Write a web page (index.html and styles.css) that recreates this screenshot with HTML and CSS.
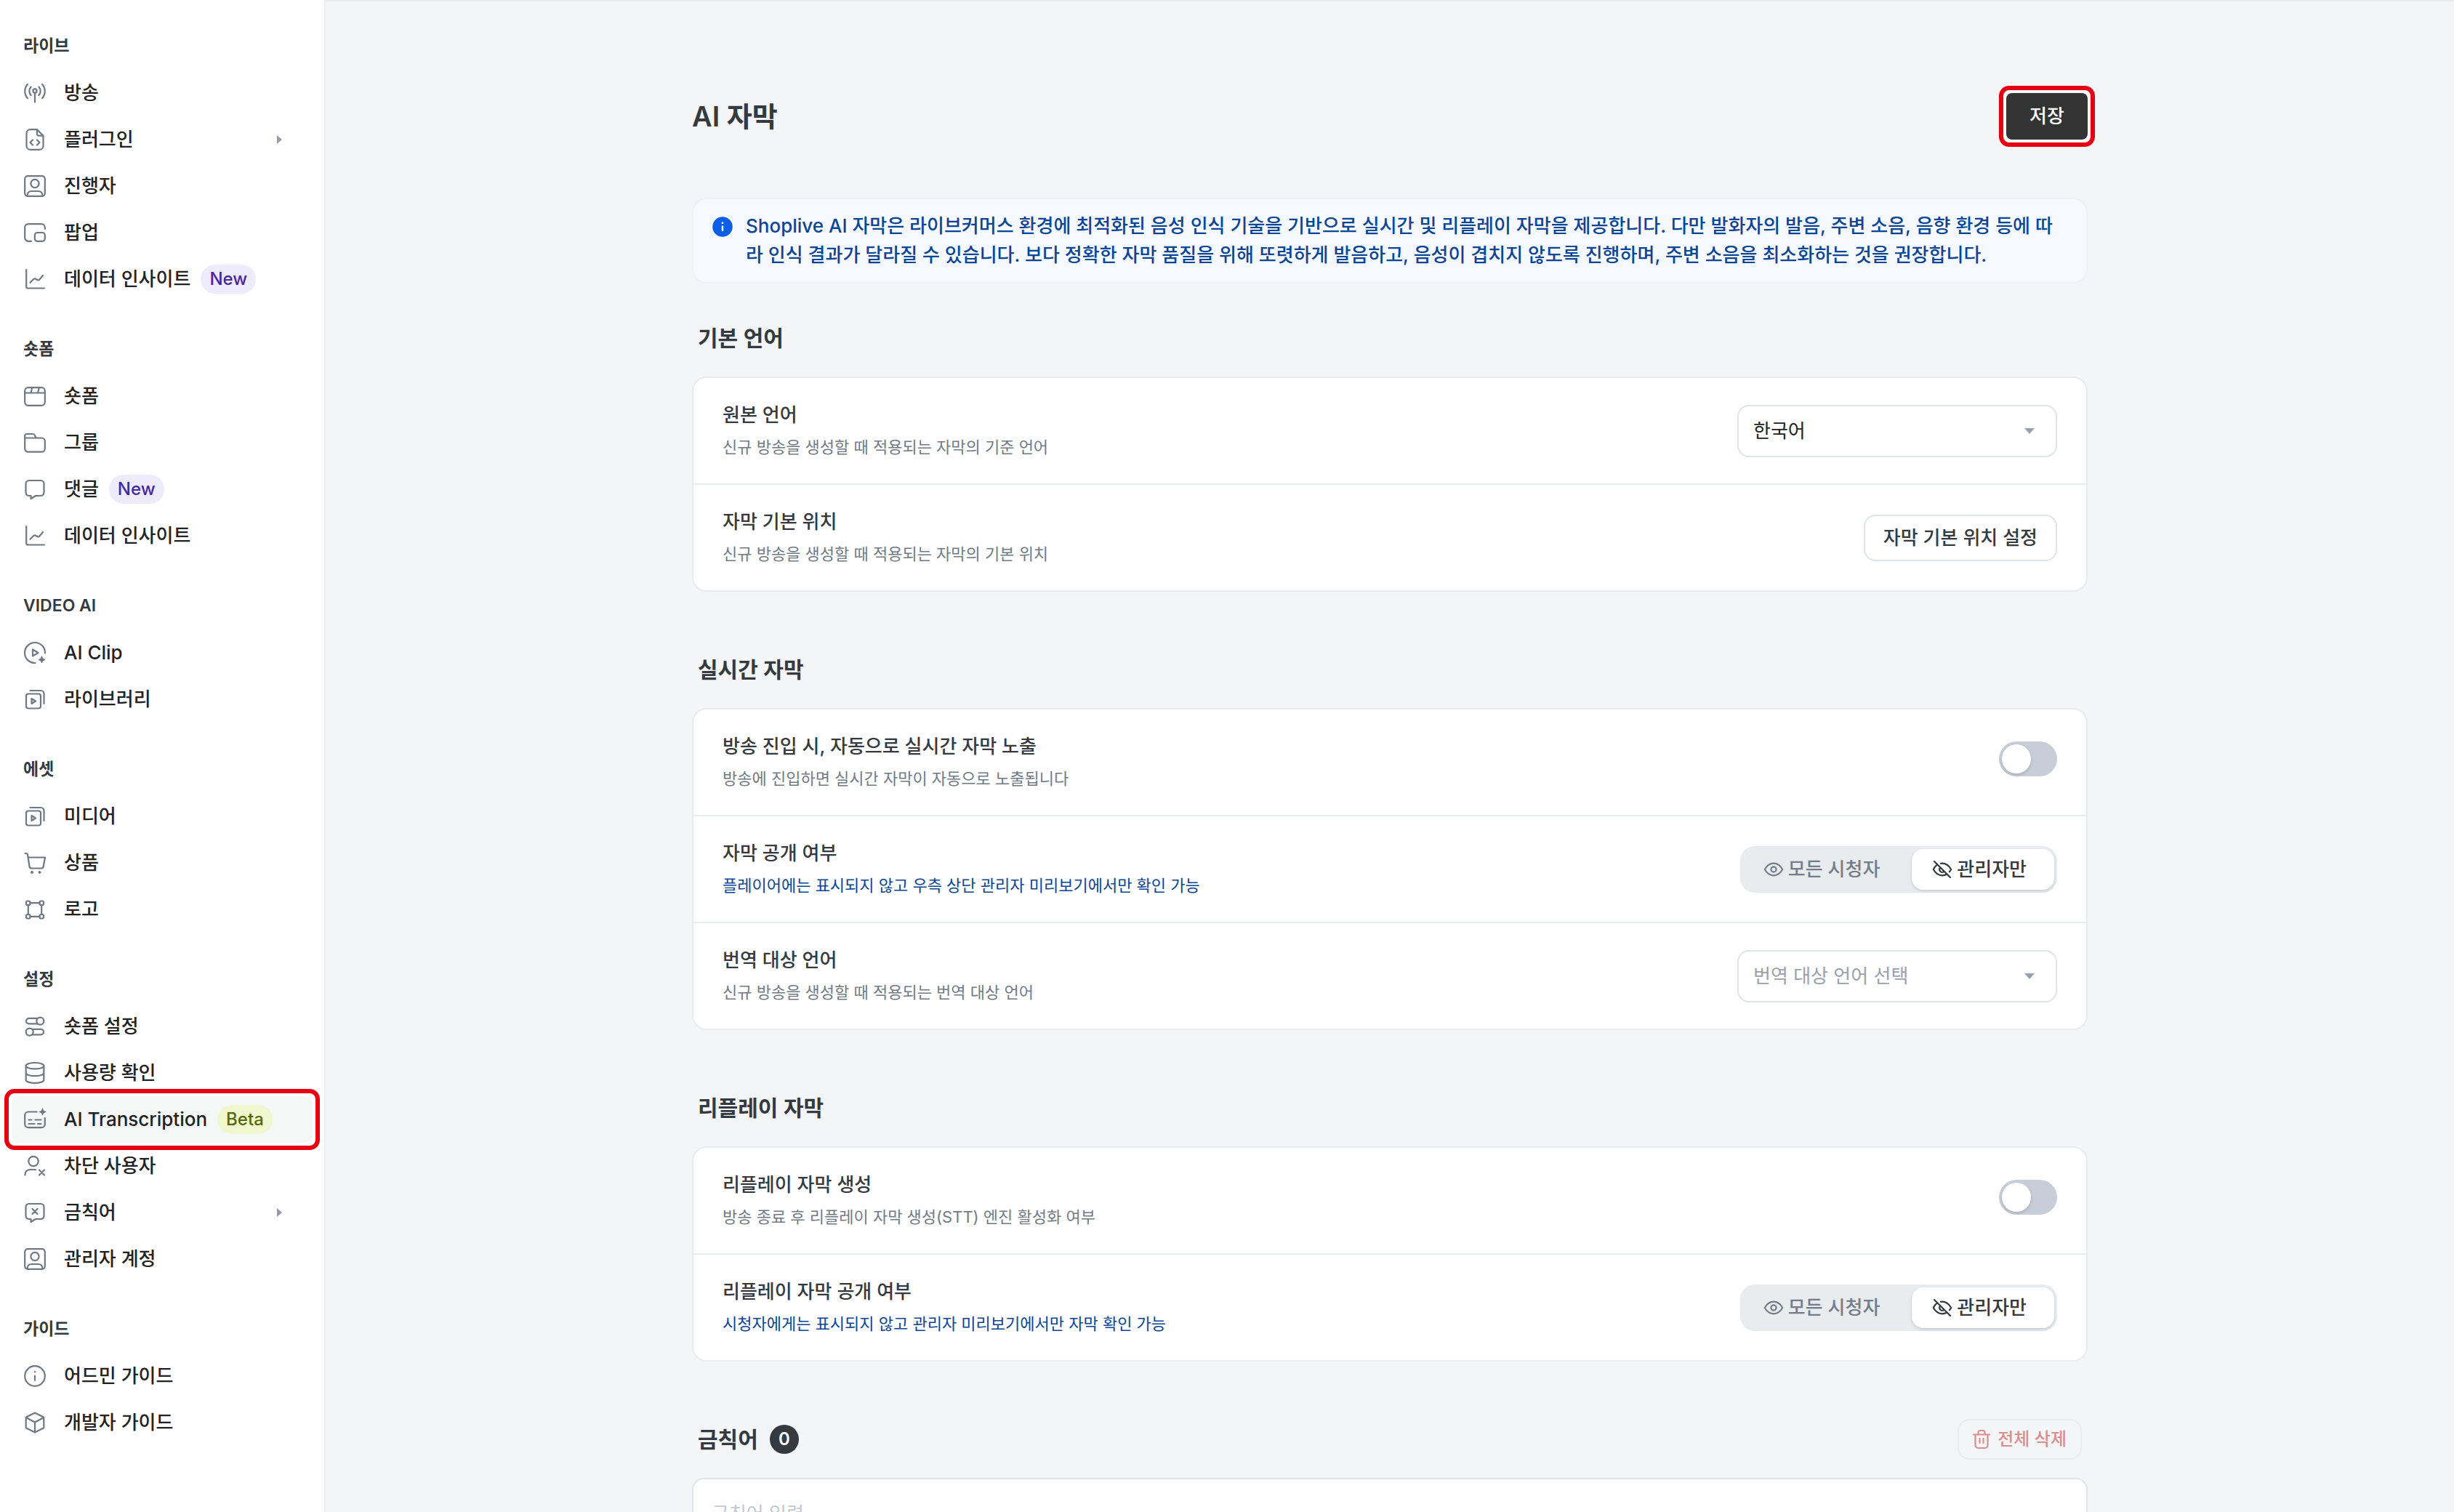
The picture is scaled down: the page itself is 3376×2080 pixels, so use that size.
FILE: index.html
```
<!DOCTYPE html>
<html lang="ko">

<head>
    <meta charset="UTF-8">
    <meta name="viewport" content="width=device-width, initial-scale=1.0">
    <title>AI 자막</title>
    <link rel="stylesheet" href="styles.css">
</head>

<body>
    <!-- icon sprite -->
    <svg class="sprite" aria-hidden="true">
        <symbol id="i-live" viewBox="0 0 32 32">
            <circle cx="16" cy="13" r="2.6" />
            <path d="M16 16v12.5M10.6 7.5a8.5 8.5 0 0 0 0 11.5M21.4 7.5a8.5 8.5 0 0 1 0 11.5M6 3.8a14.5 14.5 0 0 0 0 19.4M26 3.8a14.5 14.5 0 0 1 0 19.4" />
        </symbol>
        <symbol id="i-file" viewBox="0 0 32 32">
            <path d="M19 2.2H9.5a5 5 0 0 0-5 5v17.6a5 5 0 0 0 5 5h13a5 5 0 0 0 5-5V10.7zM19 2.2v6a2.5 2.5 0 0 0 2.5 2.5h6M13 16.5l-3.5 3.5 3.5 3.5M19 16.5l3.5 3.5-3.5 3.5" />
        </symbol>
        <symbol id="i-user-box" viewBox="0 0 32 32">
            <rect x="2.2" y="2.2" width="27.6" height="27.6" rx="4" />
            <circle cx="16" cy="12.5" r="5.6" />
            <path d="M5.5 29.5c0-4.5 2-6.5 6-6.5h9c4 0 6 2 6 6.5" />
        </symbol>
        <symbol id="i-popup" viewBox="0 0 32 32">
            <path d="M11 27.8H7a4.8 4.8 0 0 1-4.8-4.8V9A4.8 4.8 0 0 1 7 4.2h18A4.8 4.8 0 0 1 29.8 9v2" />
            <rect x="15.8" y="16" width="14" height="11.8" rx="3.5" />
        </symbol>
        <symbol id="i-chart" viewBox="0 0 32 32">
            <path d="M4.2 3v23.5a2 2 0 0 0 2 2H29M9.5 20.8l5-5a2 2 0 0 1 2.2-.3l3 1.7a2 2 0 0 0 2.4-.4l5-5.8" />
        </symbol>
        <symbol id="i-short" viewBox="0 0 32 32">
            <rect x="2.2" y="4.2" width="27.6" height="24.6" rx="4.5" />
            <path d="M2.2 11.5h27.6M12.2 4.5l-1.8 7M21.8 4.5l-1.8 7" />
        </symbol>
        <symbol id="i-folder" viewBox="0 0 32 32">
            <path d="M2.2 10.5V6.5a2.5 2.5 0 0 1 2.5-2.5h8.5a3 3 0 0 1 2.8 2l1.5 3.5M2.2 10v14.2a4.5 4.5 0 0 0 4.5 4.5h18.6a4.5 4.5 0 0 0 4.5-4.5V14a4.5 4.5 0 0 0-4.5-4.5H2.7" />
        </symbol>
        <symbol id="i-chat" viewBox="0 0 32 32">
            <path d="M8 4h16a4.5 4.5 0 0 1 4.5 4.5v12a4.5 4.5 0 0 1-4.5 4.5h-7l-6.5 4v-4H8a4.5 4.5 0 0 1-4.5-4.5v-12A4.5 4.5 0 0 1 8 4z" />
        </symbol>
        <symbol id="i-clip" viewBox="0 0 32 32">
            <path d="M16.5 30A14 14 0 1 1 30 16.5M13 11.5v9l7.5-4.5z" />
            <path class="solid" d="M25.5 21l1.4 3.1 3.1 1.4-3.1 1.4-1.4 3.1-1.4-3.1-3.1-1.4 3.1-1.4z" />
        </symbol>
        <symbol id="i-library" viewBox="0 0 32 32">
            <rect x="4" y="8.5" width="20" height="20" rx="3" />
            <path d="M9.5 4H24a4.5 4.5 0 0 1 4.5 4.5V22M11.5 15v7l5.500-3.500z" />
        </symbol>
        <symbol id="i-cart" viewBox="0 0 32 32">
            <path d="M2.5 3h1.5a2 2 0 0 1 2 1.7L8.5 21a3 3 0 0 0 3 2.5h13.2a3 3 0 0 0 3-2.5L30 8.5H6.7" />
            <circle class="solid" cx="12" cy="29" r="1.5" />
            <circle class="solid" cx="22.5" cy="29" r="1.5" />
        </symbol>
        <symbol id="i-frame" viewBox="0 0 32 32">
            <rect x="4" y="4.5" width="5.5" height="5.5" rx="2" />
            <rect x="22.5" y="4.5" width="5.5" height="5.5" rx="2" />
            <rect x="4" y="23" width="5.5" height="5.5" rx="2" />
            <rect x="22.5" y="23" width="5.5" height="5.5" rx="2" />
            <path d="M9.5 7.2h13M9.5 25.8h13M6.8 10v13M25.2 10v13" />
        </symbol>
        <symbol id="i-switches" viewBox="0 0 32 32">
            <path d="M19 4.8H7.8a3.8 3.8 0 0 0 0 7.6H19M13 19.8h11.2a3.8 3.8 0 0 1 0 7.6H13" />
            <circle cx="23.3" cy="8.6" r="5" />
            <circle cx="8.7" cy="23.6" r="5" />
        </symbol>
        <symbol id="i-db" viewBox="0 0 32 32">
            <ellipse cx="16" cy="6.2" rx="12.3" ry="4.2" />
            <path d="M3.7 6.2v19.5c0 2.3 5.5 4.2 12.3 4.2s12.3-1.9 12.3-4.2V6.2M3.7 16c0 2.3 5.5 4.2 12.3 4.2s12.3-1.9 12.3-4.2" />
        </symbol>
        <symbol id="i-transcript" viewBox="0 0 32 32">
            <path d="M18.5 5.5H7A4.8 4.8 0 0 0 2.2 10v12.5A4.8 4.8 0 0 0 7 27.2h18a4.8 4.8 0 0 0 4.8-4.7V14M7.5 16.5h4M16.5 16.5h8M7.5 22h8M20 22h4.5" />
            <path class="solid" d="M26.5 1l1.3 3.2 3.2 1.3-3.2 1.3-1.3 3.2-1.3-3.2-3.2-1.3 3.2-1.3z" />
        </symbol>
        <symbol id="i-user-x" viewBox="0 0 32 32">
            <circle cx="14" cy="9.5" r="6.7" />
            <path d="M2.5 28.5c0-5 2.5-7.5 7.5-7.5h7M22 21.5l7 7M29 21.5l-7 7" />
        </symbol>
        <symbol id="i-chat-x" viewBox="0 0 32 32">
            <path d="M8 4h16a4.5 4.5 0 0 1 4.5 4.5v12a4.5 4.5 0 0 1-4.5 4.5h-7l-6.5 4v-4H8a4.5 4.5 0 0 1-4.5-4.5v-12A4.5 4.5 0 0 1 8 4zM12.5 11l7 7M19.5 11l-7 7" />
        </symbol>
        <symbol id="i-info" viewBox="0 0 32 32">
            <circle cx="16" cy="16" r="13.8" />
            <path d="M16 15.5v6.5M16 10.2v.4" />
        </symbol>
        <symbol id="i-cube" viewBox="0 0 32 32">
            <path d="M16 2.5l12.3 6.2v14.6L16 29.5 3.7 23.3V8.7zM3.7 9L16 15.5 28.3 9M16 15.5v14" />
        </symbol>
        <symbol id="i-eye" viewBox="0 0 32 32">
            <path d="M3.8 16C7 10.2 11.2 7.7 16 7.7S25 10.2 28.2 16C25 21.8 20.8 24.3 16 24.3S7 21.8 3.8 16z" />
            <circle cx="16" cy="16" r="3.6" />
        </symbol>
        <symbol id="i-eye-off" viewBox="0 0 32 32">
            <path d="M8.5 9.8C6.5 11.3 5 13.5 3.8 16 7 21.8 11.2 24.3 16 24.3c2.2 0 4.2-.5 6-1.5M14 7.8c6-.6 10.8 2.2 14.2 8.2-.6 1.2-1.4 2.3-2.3 3.3M13.2 13.5a3.7 3.7 0 0 0 5.3 5.2M5 5l22 22" />
        </symbol>
        <symbol id="i-trash" viewBox="0 0 28 28">
            <path d="M3 7.5h22M5.5 7.5v14.5a4 4 0 0 0 4 4h9a4 4 0 0 0 4-4V7.5M9.5 7V4.5a2.5 2.5 0 0 1 2.5-2.5h4a2.5 2.5 0 0 1 2.5 2.5V7M11.5 13v6M16.5 13v6" />
        </symbol>
    </svg>

    <div class="layout">
        <nav class="sidebar">
            <section class="menu">
                <h2 class="menu-title">라이브</h2>
                <a class="menu-item" href="#"><svg class="icon"><use href="#i-live" /></svg>방송</a>
                <a class="menu-item" href="#"><svg class="icon"><use href="#i-file" /></svg>플러그인<span class="arrow"></span></a>
                <a class="menu-item" href="#"><svg class="icon"><use href="#i-user-box" /></svg>진행자</a>
                <a class="menu-item" href="#"><svg class="icon"><use href="#i-popup" /></svg>팝업</a>
                <a class="menu-item" href="#"><svg class="icon"><use href="#i-chart" /></svg>데이터 인사이트<span class="tag tag-new">New</span></a>
            </section>
            <section class="menu">
                <h2 class="menu-title">숏폼</h2>
                <a class="menu-item" href="#"><svg class="icon"><use href="#i-short" /></svg>숏폼</a>
                <a class="menu-item" href="#"><svg class="icon"><use href="#i-folder" /></svg>그룹</a>
                <a class="menu-item" href="#"><svg class="icon"><use href="#i-chat" /></svg>댓글<span class="tag tag-new">New</span></a>
                <a class="menu-item" href="#"><svg class="icon"><use href="#i-chart" /></svg>데이터 인사이트</a>
            </section>
            <section class="menu">
                <h2 class="menu-title">VIDEO AI</h2>
                <a class="menu-item" href="#"><svg class="icon"><use href="#i-clip" /></svg>AI Clip</a>
                <a class="menu-item" href="#"><svg class="icon"><use href="#i-library" /></svg>라이브러리</a>
            </section>
            <section class="menu">
                <h2 class="menu-title">에셋</h2>
                <a class="menu-item" href="#"><svg class="icon"><use href="#i-library" /></svg>미디어</a>
                <a class="menu-item" href="#"><svg class="icon"><use href="#i-cart" /></svg>상품</a>
                <a class="menu-item" href="#"><svg class="icon"><use href="#i-frame" /></svg>로고</a>
            </section>
            <section class="menu">
                <h2 class="menu-title">설정</h2>
                <a class="menu-item" href="#"><svg class="icon"><use href="#i-switches" /></svg>숏폼 설정</a>
                <a class="menu-item" href="#"><svg class="icon"><use href="#i-db" /></svg>사용량 확인</a>
                <a class="menu-item active marked" href="#"><svg class="icon"><use href="#i-transcript" /></svg>AI Transcription<span class="tag tag-beta">Beta</span></a>
                <a class="menu-item" href="#"><svg class="icon"><use href="#i-user-x" /></svg>차단 사용자</a>
                <a class="menu-item" href="#"><svg class="icon"><use href="#i-chat-x" /></svg>금칙어<span class="arrow"></span></a>
                <a class="menu-item" href="#"><svg class="icon"><use href="#i-user-box" /></svg>관리자 계정</a>
            </section>
            <section class="menu">
                <h2 class="menu-title">가이드</h2>
                <a class="menu-item" href="#"><svg class="icon"><use href="#i-info" /></svg>어드민 가이드</a>
                <a class="menu-item" href="#"><svg class="icon"><use href="#i-cube" /></svg>개발자 가이드</a>
            </section>
        </nav>

        <main class="main">
            <div class="content">
                <header class="page-header">
                    <h1>AI 자막</h1>
                    <button class="save marked" type="button">저장</button>
                </header>

                <div class="notice">
                    <svg class="notice-icon" viewBox="0 0 30 30"><circle cx="15" cy="15" r="15" /><path d="M15 13.5v7.5M15 8.500v2.500" /></svg>
                    <p>Shoplive AI 자막은 라이브커머스 환경에 최적화된 음성 인식 기술을 기반으로 실시간 및 리플레이 자막을 제공합니다. 다만 발화자의 발음, 주변 소음, 음향 환경 등에 따라 인식 결과가 달라질 수 있습니다. 보다 정확한 자막 품질을 위해 또렷하게 발음하고, 음성이 겹치지 않도록 진행하며, 주변 소음을 최소화하는 것을 권장합니다.</p>
                </div>

                <section class="group">
                    <div class="group-head"><h2>기본 언어</h2></div>
                    <div class="card">
                        <div class="row">
                            <div class="text">
                                <label class="name" for="lang">원본 언어</label>
                                <p class="desc">신규 방송을 생성할 때 적용되는 자막의 기준 언어</p>
                            </div>
                            <div class="select">
                                <select id="lang"><option>한국어</option></select>
                            </div>
                        </div>
                        <div class="row">
                            <div class="text">
                                <div class="name">자막 기본 위치</div>
                                <p class="desc">신규 방송을 생성할 때 적용되는 자막의 기본 위치</p>
                            </div>
                            <button class="outline" type="button">자막 기본 위치 설정</button>
                        </div>
                    </div>
                </section>

                <section class="group">
                    <div class="group-head"><h2>실시간 자막</h2></div>
                    <div class="card">
                        <div class="row">
                            <div class="text">
                                <label class="name" for="auto">방송 진입 시, 자동으로 실시간 자막 노출</label>
                                <p class="desc">방송에 진입하면 실시간 자막이 자동으로 노출됩니다</p>
                            </div>
                            <input class="toggle" type="checkbox" id="auto">
                        </div>
                        <div class="row">
                            <div class="text">
                                <div class="name">자막 공개 여부</div>
                                <p class="desc info">플레이어에는 표시되지 않고 우측 상단 관리자 미리보기에서만 확인 가능</p>
                            </div>
                            <div class="segment">
                                <label><input type="radio" name="live"><svg class="icon"><use href="#i-eye" /></svg>모든 시청자</label>
                                <label><input type="radio" name="live" checked><svg class="icon"><use href="#i-eye-off" /></svg>관리자만</label>
                            </div>
                        </div>
                        <div class="row">
                            <div class="text">
                                <label class="name" for="target">번역 대상 언어</label>
                                <p class="desc">신규 방송을 생성할 때 적용되는 번역 대상 언어</p>
                            </div>
                            <div class="select">
                                <select class="empty" id="target"><option>번역 대상 언어 선택</option></select>
                            </div>
                        </div>
                    </div>
                </section>

                <section class="group">
                    <div class="group-head"><h2>리플레이 자막</h2></div>
                    <div class="card">
                        <div class="row">
                            <div class="text">
                                <label class="name" for="replay">리플레이 자막 생성</label>
                                <p class="desc">방송 종료 후 리플레이 자막 생성(STT) 엔진 활성화 여부</p>
                            </div>
                            <input class="toggle" type="checkbox" id="replay">
                        </div>
                        <div class="row">
                            <div class="text">
                                <div class="name">리플레이 자막 공개 여부</div>
                                <p class="desc info">시청자에게는 표시되지 않고 관리자 미리보기에서만 자막 확인 가능</p>
                            </div>
                            <div class="segment">
                                <label><input type="radio" name="vod"><svg class="icon"><use href="#i-eye" /></svg>모든 시청자</label>
                                <label><input type="radio" name="vod" checked><svg class="icon"><use href="#i-eye-off" /></svg>관리자만</label>
                            </div>
                        </div>
                    </div>
                </section>

                <section class="group">
                    <div class="group-head">
                        <h2><label for="words">금칙어</label></h2>
                        <span class="count">0</span>
                        <button class="delete" type="button" disabled><svg class="icon"><use href="#i-trash" /></svg>전체 삭제</button>
                    </div>
                    <textarea class="words" id="words" rows="6" placeholder="금칙어 입력"></textarea>
                </section>
            </div>
        </main>
    </div>
</body>

</html>
```
FILE: styles.css
```
:root {
    --text: #343a40;
    --dark: #222222;
    --muted: #717b87;
    --light: #98a1ac;
    --line: #e9ecef;
    --field: #dfe3ea;
    --blue: #0b4596;
    --red: #e60012;
}

* {
    box-sizing: border-box;
}

body {
    margin: 0;
    font-family: Inter, "Noto Sans CJK KR", sans-serif;
    font-size: 26px;
    line-height: 40px;
    font-weight: 500;
    color: var(--text);
    background-color: #f3f5f7;
}

h1, h2, p {
    margin: 0;
}

button, select, textarea {
    font: inherit;
    color: inherit;
}

.sprite {
    position: absolute;
    width: 0;
    height: 0;
}

.icon {
    flex: none;
    width: 32px;
    height: 32px;
    fill: none;
    stroke: currentColor;
    stroke-width: 2.2;
    stroke-linecap: round;
    stroke-linejoin: round;
}

.solid {
    fill: currentColor;
    stroke-width: 1;
}

.layout {
    display: flex;
    height: 100vh;
}

/* sidebar */

.sidebar {
    flex: none;
    width: 448px;
    padding: 30px 14px 30px 16px;
    border-right: 2px solid #eceff1;
    background-color: #fff;
    overflow: hidden;
}

.menu {
    margin-bottom: 31px;
}

.menu-title {
    padding: 0 16px;
    font-size: 23px;
    line-height: 66px;
    font-weight: 600;
}

.menu-item {
    display: flex;
    align-items: center;
    height: 64px;
    margin-right: 2px;
    padding: 0 16px;
    border-radius: 12px;
    color: var(--dark);
    text-decoration: none;
}

.menu-item .icon {
    margin-right: 24px;
    color: #6f7885;
}

.active {
    background-color: #f5f6f6;
}

.marked {
    position: relative;
}

.marked::after {
    content: "";
    position: absolute;
    inset: -10px;
    border: 6px solid var(--red);
    border-radius: 14px;
}

.arrow {
    margin: 0 26px 0 auto;
    border-left: 7px solid #959ca8;
    border-top: 6px solid transparent;
    border-bottom: 6px solid transparent;
}

.tag {
    margin-left: 14px;
    padding: 0 12px;
    border-radius: 20px;
    font-size: 24px;
}

.tag-new {
    background-color: #eeebfd;
    color: #4527a0;
}

.tag-beta {
    background-color: #f1f8d0;
    color: #55680c;
}

/* main */

.main {
    flex: 1;
    border-top: 2px solid #e6e8eb;
    overflow-y: auto;
    scrollbar-width: none;
}

.content {
    max-width: 1920px;
    margin: 0 auto;
    padding: 126px 0 80px;
}

.page-header {
    display: flex;
    align-items: center;
    justify-content: space-between;
    margin-bottom: 80px;
}

h1 {
    font-size: 38px;
    line-height: 56px;
    font-weight: 600;
}

.save {
    width: 112px;
    height: 64px;
    padding: 0;
    border: 0;
    border-radius: 8px;
    background-color: #333;
    color: #fff;
}

.notice {
    display: flex;
    gap: 17px;
    padding: 17px 25px;
    border: 2px solid #edf1f9;
    border-radius: 20px;
    background-color: #f6f9fe;
    color: var(--blue);
    word-break: break-all;
}

.notice-icon {
    flex: none;
    width: 30px;
    height: 30px;
    margin-top: 6px;
    fill: #0b5fe6;
    stroke: #fff;
    stroke-width: 2.4;
}

.group {
    margin-top: 80px;
}

.notice + .group {
    margin-top: 48px;
}

.group-head {
    display: flex;
    align-items: center;
    height: 54px;
    margin-bottom: 26px;
    padding: 0 8px;
}

.group-head h2 {
    font-size: 30px;
    font-weight: 600;
}

.card {
    border: 2px solid var(--line);
    border-radius: 20px;
    background-color: #fff;
}

.row {
    display: flex;
    align-items: center;
    justify-content: space-between;
    min-height: 145px;
    padding: 0 40px;
}

.row + .row {
    min-height: 147px;
    border-top: 2px solid var(--line);
}

.text {
    padding-bottom: 2px;
}

.name {
    display: block;
}

.desc {
    margin-top: 6px;
    font-size: 22px;
    line-height: 36px;
    font-weight: 400;
    color: var(--muted);
}

.info {
    color: var(--blue);
}

.select {
    position: relative;
    width: 440px;
}

.select::after {
    content: "";
    position: absolute;
    top: 32px;
    right: 31px;
    border-top: 8px solid #98a1ac;
    border-left: 7px solid transparent;
    border-right: 7px solid transparent;
    pointer-events: none;
}

.select select {
    display: block;
    width: 100%;
    height: 72px;
    padding: 0 20px;
    border: 2px solid var(--field);
    border-radius: 16px;
    background-color: #fff;
    color: var(--dark);
    font-weight: 400;
    appearance: none;
}

.select .empty {
    color: var(--light);
}

.outline {
    height: 64px;
    padding: 0 25px;
    border: 2px solid var(--field);
    border-radius: 16px;
    background-color: #fff;
}

.toggle {
    width: 80px;
    height: 48px;
    margin: 0 0 10px;
    padding: 4px;
    border-radius: 24px;
    background-color: #c7ced8;
    appearance: none;
}

.toggle::before {
    content: "";
    display: block;
    width: 40px;
    height: 40px;
    border-radius: 20px;
    background-color: #fff;
    box-shadow: 0 2px 4px rgba(0, 0, 0, .15);
}

.toggle:checked {
    padding-left: 36px;
    background-color: #0b5fe6;
}

.segment {
    display: flex;
    padding: 4px;
    border-radius: 20px;
    background-color: var(--line);
}

.segment label {
    display: flex;
    align-items: center;
    gap: 4px;
    height: 56px;
    padding: 0 38px 0 26px;
    border-radius: 16px;
    color: #747d89;
}

.segment label:first-child {
    padding-right: 44px;
}

.segment label:has(:checked) {
    background-color: #fff;
    color: var(--text);
    box-shadow: 0 2px 4px rgba(0, 0, 0, .14);
}

.segment input {
    display: none;
}

.count {
    width: 40px;
    margin-left: 16px;
    border-radius: 20px;
    background-color: #343a40;
    color: #fff;
    font-size: 24px;
    font-weight: 600;
    text-align: center;
}

.delete {
    display: flex;
    align-items: center;
    gap: 8px;
    height: 56px;
    margin-left: auto;
    padding: 0 19px 0 17px;
    border: 2px solid #eaedf0;
    border-radius: 16px;
    background-color: transparent;
    color: #dc8e8e;
    font-size: 24px;
}

.delete .icon {
    width: 28px;
    height: 28px;
}

.words {
    display: block;
    width: 100%;
    padding: 28px 25px;
    border: 2px solid var(--field);
    border-radius: 16px;
    background-color: #fff;
    resize: none;
}

.words::placeholder {
    color: #c3c9d1;
    font-weight: 400;
}
```
